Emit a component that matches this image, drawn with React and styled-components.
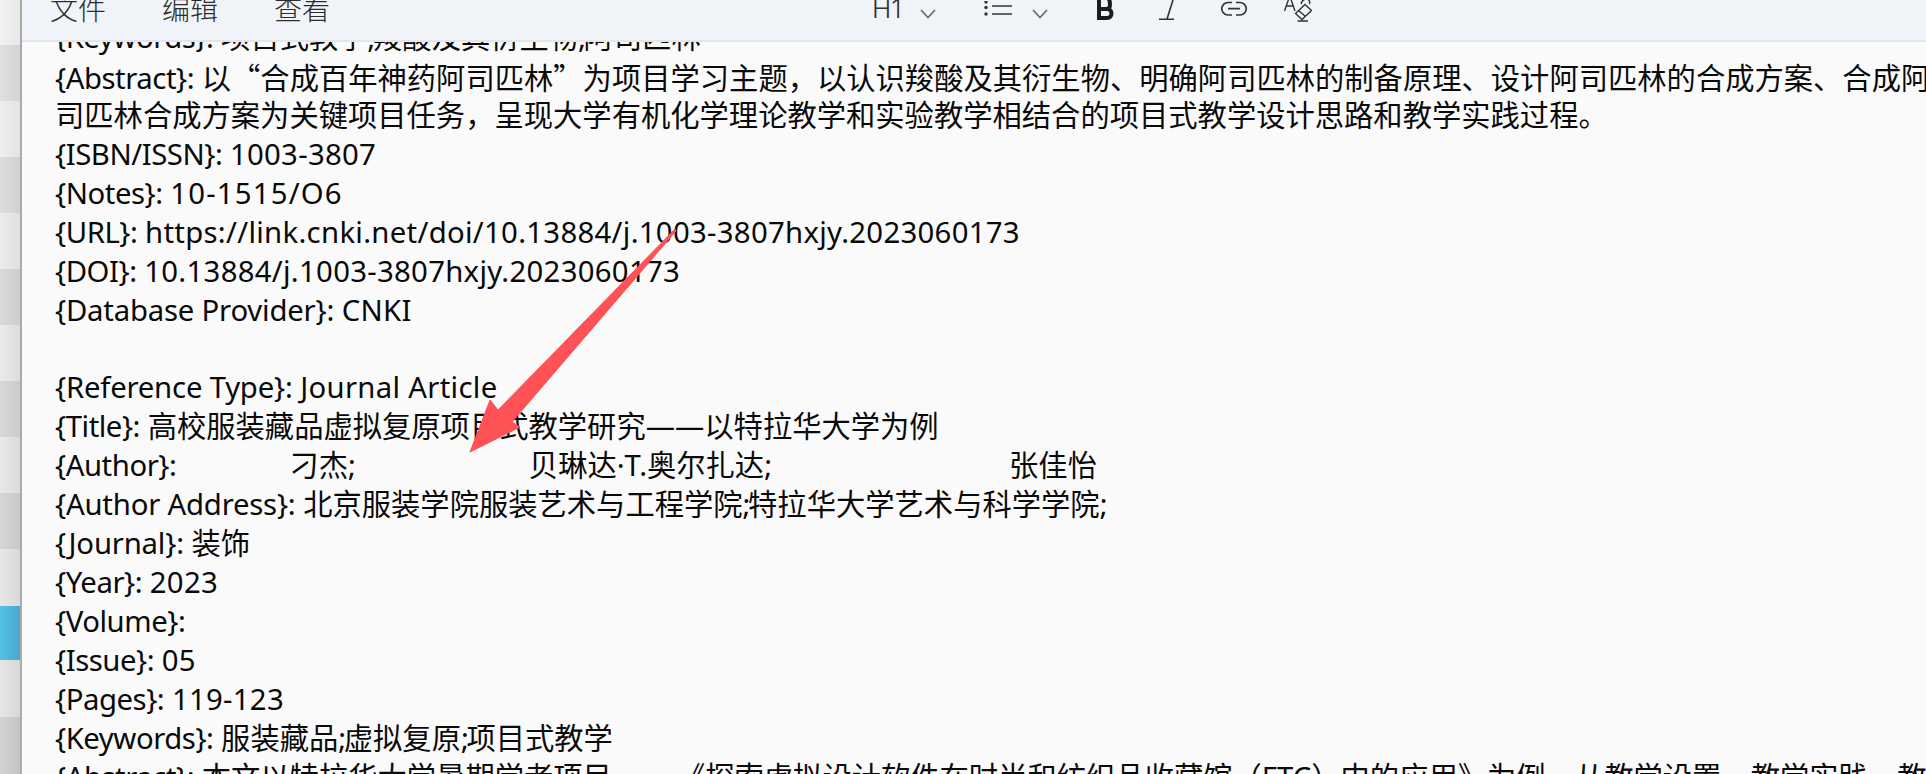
import React from 'react';
import styled, { createGlobalStyle } from 'styled-components';

const GlobalStyle = createGlobalStyle`
  html, body {
    margin: 0;
    padding: 0;
    height: 100%;
    overflow: hidden;
    background: #fafafa;
  }
`;

const Window = styled.div`
  display: flex;
  position: relative;
  width: 1926px;
  height: 774px;
  overflow: hidden;
  font-family: "Noto Sans", "Noto Sans CJK SC", sans-serif;
`;

const Stripes = styled.div`
  flex: 0 0 22px;
  height: 774px;
  display: flex;
  flex-direction: column;
  border-right: 2px solid #aaaaaa;
  box-sizing: border-box;
`;

const Stripe = styled.div`
  flex: 0 0 ${p => p.$h}px;
  background: ${p => p.$blue
    ? 'linear-gradient(90deg, #55c1e6, #49a9cb)'
    : `linear-gradient(90deg, ${p.$from}, ${p.$to})`};
`;

const Main = styled.div`
  flex: 1;
  display: flex;
  flex-direction: column;
  min-width: 0;
`;

const Toolbar = styled.div`
  flex: 0 0 42px;
  box-sizing: border-box;
  background: #f0f4f9;
  border-bottom: 2px solid #e3e6ea;
  display: flex;
  align-items: flex-start;
  position: relative;
  z-index: 2;
`;

const MenuGroup = styled.div`
  display: flex;
  gap: 56px;
  margin-left: 28px;
  margin-top: -5px;
`;

const MenuItem = styled.span`
  font-size: 28px;
  line-height: 28px;
  color: #2c2c2c;
  font-weight: 300;
`;

const Tools = styled.div`
  display: flex;
  align-items: flex-start;
  margin-left: 542px;
  color: #333;
`;

const Tool = styled.span`
  display: block;
  height: 22px;
  margin-right: ${p => p.$gap || 0}px;
  margin-top: ${p => p.$top || 0}px;
`;

const HeadingLabel = styled.span`
  display: block;
  width: 28px;
  font-family: Inter, sans-serif;
  font-weight: 300;
  font-size: 26px;
  line-height: 18px;
  color: #333;
`;

const Editor = styled.div`
  flex: 1;
  overflow: hidden;
  background: #fafafa;
  padding-left: 33px;
`;

const Lines = styled.div`
  margin-top: -24px;
  width: 1950px;
`;

const Line = styled.div`
  font-size: 29.3px;
  line-height: 38.95px;
  height: 38.95px;
  color: #0a0a0a;
  white-space: nowrap;
`;

const Label = styled.span`
  letter-spacing: ${p => (p.$long ? '-0.2px' : '-0.45px')};
`;

const Value = styled.span`
  letter-spacing: ${p => (p.$wide ? '1.2px' : '0.3px')};
`;

const Semi = styled.span`
  letter-spacing: -2.4px;
`;

const Gap = styled.span`
  display: inline-block;
  width: ${p => p.$w}px;
`;

const Cjk = styled.span`
  font-family: "Noto Sans CJK SC", sans-serif;
`;

const ArrowLayer = styled.svg`
  position: absolute;
  left: 0;
  top: 0;
  pointer-events: none;
  z-index: 1;
`;

const stripes = [
  [45, '#f1f1f1', '#e9e9e9'], [56, '#e0e0e0', '#d4d4d4'], [56, '#eeeeee', '#e3e3e3'],
  [56, '#dddddd', '#d0d0d0'], [56, '#ececec', '#e0e0e0'], [56, '#dadada', '#cdcdcd'],
  [56, '#eaeaea', '#dddddd'], [56, '#d8d8d8', '#cbcbcb'], [56, '#e8e8e8', '#dbdbdb'],
  [56, '#d6d6d6', '#c8c8c8'], [57, '#e7e7e7', '#d9d9d9'], [54, null, null],
  [57, '#e6e6e6', '#d7d7d7'], [57, '#d4d4d4', '#c3c3c3'],
];

const Chevron = () => (
  <svg width="16" height="10" viewBox="0 0 16 10" fill="none" stroke="#666" strokeWidth="1.6">
    <path d="M1 1 L8 8.5 L15 1" />
  </svg>
);

export default function App() {
  return (
    <>
      <GlobalStyle />
      <Window>
        <Stripes>
          {stripes.map(([h, from, to], i) => (
            <Stripe key={i} $h={h} $from={from} $to={to} $blue={!from} />
          ))}
        </Stripes>
        <Main>
          <Toolbar>
            <MenuGroup>
              <MenuItem>文件</MenuItem>
              <MenuItem>编辑</MenuItem>
              <MenuItem>查看</MenuItem>
            </MenuGroup>
            <Tools>
              <Tool $gap={20}><HeadingLabel>H1</HeadingLabel></Tool>
              <Tool $gap={48} $top={2}><Chevron /></Tool>
              <Tool $gap={20}>
                <svg width="28" height="16" viewBox="0 0 28 16" fill="none" stroke="#333" strokeWidth="1.6">
                  <path d="M8 5 H28 M8 13 H28" />
                  <g fill="#333" stroke="none">
                    <circle cx="2" cy="1" r="1.7" />
                    <circle cx="2" cy="6.5" r="1.7" />
                    <circle cx="2" cy="13" r="1.7" />
                  </g>
                </svg>
              </Tool>
              <Tool $gap={49} $top={2}><Chevron /></Tool>
              <Tool $gap={45}>
                <svg width="17" height="20" viewBox="0 0 17 20" fill="none" stroke="#1c1c1c" strokeWidth="4">
                  <path d="M2 -3 V18 H10 C16 18 16 9 10 9 H2 M10 9 C14 9 14 0 10 -3" />
                </svg>
              </Tool>
              <Tool $gap={46}>
                <svg width="15" height="20" viewBox="0 0 15 20" fill="none" stroke="#333" strokeWidth="1.6">
                  <path d="M0 19.2 H15 M8 19 L14 0" />
                </svg>
              </Tool>
              <Tool $gap={36}>
                <svg width="28" height="16" viewBox="0 0 28 16" fill="none" stroke="#333" strokeWidth="1.7">
                  <path d="M12 1.5 H8 A6 6 0 0 0 8 14 H12 M16 1.5 H20 A6 6 0 0 1 20 14 H16 M8 7.7 H20" />
                </svg>
              </Tool>
              <Tool>
                <svg width="28" height="22" viewBox="0 0 28 22" fill="none" stroke="#333" strokeWidth="1.4">
                  <path d="M0.5 11 L5 -2 H6.5 L11 11 M2.5 6 H9" />
                  <path d="M17 4 C19 -3 27 -2 25.5 4" />
                  <path d="M11.5 13.5 L21 4.5 L27.5 10.5 L18 19.5 Z M14.5 10.5 L21.5 16.5 M13.5 21 H24" />
                </svg>
              </Tool>
            </Tools>
          </Toolbar>
          <Editor>
            <Lines>
              <Line><Label>{'{Keywords}:'}</Label> 项目式教学<Semi>;</Semi>羧酸及其衍生物<Semi>;</Semi>阿司匹林</Line>
              <Line><Label>{'{Abstract}:'}</Label> 以<Cjk>“</Cjk>合成百年神药阿司匹林<Cjk>”</Cjk>为项目学习主题，以认识羧酸及其衍生物、明确阿司匹林的制备原理、设计阿司匹林的合成方案、合成阿司</Line>
              <Line>司匹林合成方案为关键项目任务，呈现大学有机化学理论教学和实验教学相结合的项目式教学设计思路和教学实践过程。</Line>
              <Line><Label>{'{ISBN/ISSN}:'}</Label> <Value>1003-3807</Value></Line>
              <Line><Label>{'{Notes}:'}</Label> <Value $wide>10-1515/O6</Value></Line>
              <Line><Label>{'{URL}:'}</Label> <Value>https://link.cnki.net/doi/10.13884/j.1003-3807hxjy.2023060173</Value></Line>
              <Line><Label>{'{DOI}:'}</Label> <Value>10.13884/j.1003-3807hxjy.2023060173</Value></Line>
              <Line><Label $long>{'{Database Provider}:'}</Label> <Value>CNKI</Value></Line>
              <Line />
              <Line><Label $long>{'{Reference Type}:'}</Label> <Value>Journal Article</Value></Line>
              <Line><Label>{'{Title}:'}</Label> 高校服装藏品虚拟复原项目式教学研究——以特拉华大学为例</Line>
              <Line><Label>{'{Author}:'}</Label><Gap $w={113} />刁杰;<Gap $w={173} />贝琳达·T.奥尔扎达;<Gap $w={237} />张佳怡</Line>
              <Line><Label $long>{'{Author Address}:'}</Label> 北京服装学院服装艺术与工程学院<Semi>;</Semi>特拉华大学艺术与科学学院<Semi>;</Semi></Line>
              <Line><Label $long>{'{Journal}:'}</Label> 装饰</Line>
              <Line><Label>{'{Year}:'}</Label> <Value>2023</Value></Line>
              <Line><Label>{'{Volume}:'}</Label></Line>
              <Line><Label>{'{Issue}:'}</Label> <Value>05</Value></Line>
              <Line><Label>{'{Pages}:'}</Label> <Value>119-123</Value></Line>
              <Line><Label>{'{Keywords}:'}</Label> 服装藏品<Semi>;</Semi>虚拟复原<Semi>;</Semi>项目式教学</Line>
              <Line><Label>{'{Abstract}:'}</Label> 本文以特拉华大学暑期学者项目<Gap $w={64} />《探索虚拟设计软件在时尚和纺织品收藏馆（FTC）中的应用》为例，从教学设置、教学实践、教学</Line>
            </Lines>
          </Editor>
        </Main>
        <ArrowLayer width="1926" height="774" viewBox="0 0 1926 774">
          <path
            d="M675 229 L498 410 L490 400 L470 452 L520 427 L512 422 L676 231 Z"
            fill="#ff5257"
            stroke="#ff5257"
            strokeWidth="1"
            strokeLinejoin="round"
          />
        </ArrowLayer>
      </Window>
    </>
  );
}
